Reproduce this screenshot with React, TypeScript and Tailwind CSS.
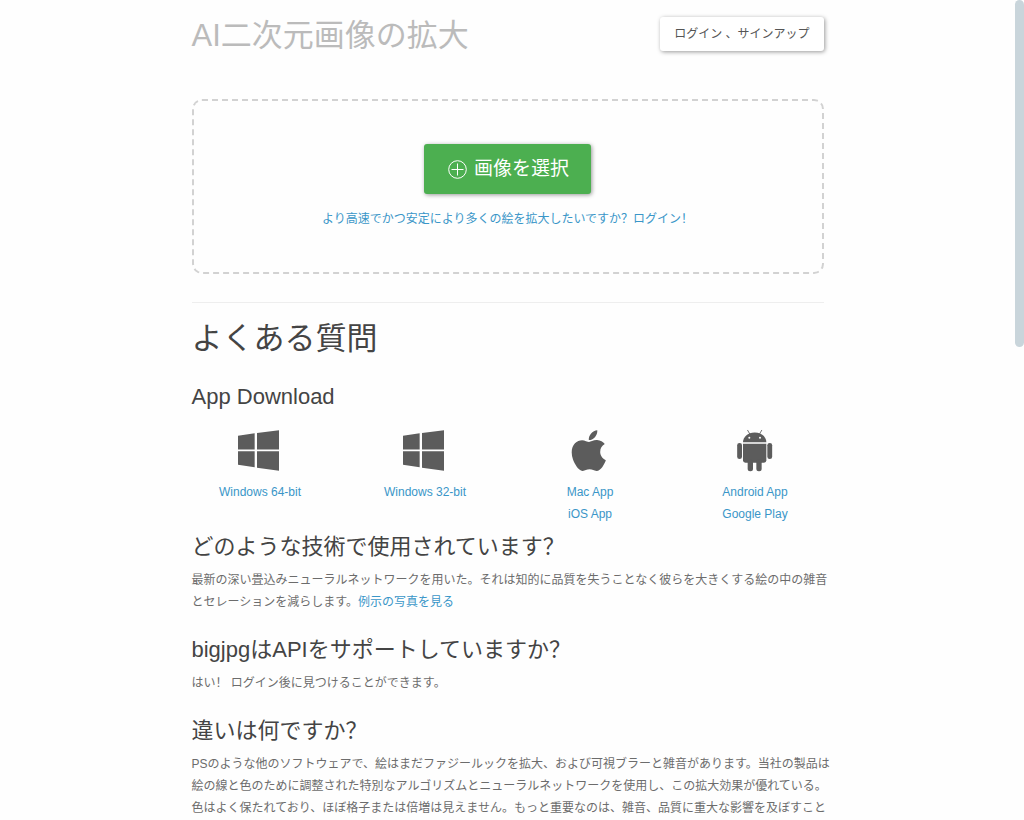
import type { ReactNode } from 'react';

interface DownloadLink {
  label: string;
  href: string;
}

interface Platform {
  name: string;
  icon: ReactNode;
  links: DownloadLink[];
}

interface FaqItem {
  question: string;
  answer: ReactNode;
}

function WindowsIcon() {
  return (
    <svg viewBox="174 26 132 132" className="h-11 w-11" fill="currentColor" aria-hidden="true">
      <path d="M174 46.5 224 39v48.500H174zM231 38l66-8.500V87.500H231zM174 93h50v47.500L174 133.500zM231 93h66v58.500L231 142z" />
    </svg>
  );
}

function AppleIcon() {
  return (
    <svg viewBox="144 26 132 132" className="h-11 w-11" fill="currentColor" aria-hidden="true">
      <path
        transform="translate(154 21.3) scale(.272)"
        d="M318.7 268.7c-.2-36.7 16.4-64.4 50-84.8-18.800-26.900-47.200-41.700-84.700-44.600-35.500-2.800-74.300 20.700-88.500 20.700-15 0-49.400-19.700-76.400-19.700C63.300 141.200 4 184.800 4 273.500q0 39.300 14.400 81.200c12.800 36.700 59 126.700 107.200 125.200 25.200-.6 43-17.900 75.800-17.900 31.800 0 48.300 17.900 76.400 17.900 48.600-.7 90.400-82.500 102.600-119.300-65.200-30.700-61.700-90-61.700-91.900zm-56.600-164.200c27.300-32.400 24.800-61.900 24-72.500-24.100 1.400-52 16.400-67.900 34.900-17.500 19.800-27.800 44.300-25.600 71.900 26.100 2 49.900-11.400 69.500-34.300z"
      />
    </svg>
  );
}

function AndroidIcon() {
  return (
    <svg viewBox="639 26 132 132" className="h-11 w-11" fill="currentColor" aria-hidden="true">
      <path d="M669 66c0-16 14-29.500 35-29.500S739 50 739 66z" />
      <path d="m683 30 7 12M725 30l-7 12" stroke="currentColor" strokeWidth="2.5" strokeLinecap="round" />
      <circle cx="688" cy="52" r="3" fill="#fefefe" />
      <circle cx="720" cy="52" r="3" fill="#fefefe" />
      <path d="M669 70.500h70v49.500a7 7 0 0 1-7 7h-56a7 7 0 0 1-7-7z" />
      <rect x="651.500" y="68" width="14.500" height="48" rx="7" />
      <rect x="742" y="68" width="14.500" height="48" rx="7" />
      <rect x="683" y="118" width="16" height="34.500" rx="7.500" />
      <rect x="709" y="118" width="16" height="34.500" rx="7.500" />
    </svg>
  );
}

function PlusCircleIcon() {
  return (
    <svg viewBox="0 0 19 19" className="h-[19px] w-[19px]" fill="none" stroke="currentColor" aria-hidden="true">
      <circle cx="9.500" cy="9.500" r="8.800" />
      <path d="M9.500 3.500v12M3.500 9.500h12" />
    </svg>
  );
}

const linkClass = 'text-[#3a96c8] hover:underline';

const platforms: Platform[] = [
  { name: 'win64', icon: <WindowsIcon />, links: [{ label: 'Windows 64-bit', href: '#win64' }] },
  { name: 'win32', icon: <WindowsIcon />, links: [{ label: 'Windows 32-bit', href: '#win32' }] },
  {
    name: 'apple',
    icon: <AppleIcon />,
    links: [
      { label: 'Mac App', href: '#mac' },
      { label: 'iOS App', href: '#ios' },
    ],
  },
  {
    name: 'android',
    icon: <AndroidIcon />,
    links: [
      { label: 'Android App', href: '#android' },
      { label: 'Google Play', href: '#play' },
    ],
  },
];

const faq: FaqItem[] = [
  {
    question: 'どのような技術で使用されています？',
    answer: (
      <>
        最新の深い畳込みニューラルネットワークを用いた。それは知的に品質を失うことなく彼らを大きくする絵の中の雑音とセレーションを減らします。
        <a href="#examples" className={linkClass}>例示の写真を見る</a>
      </>
    ),
  },
  {
    question: 'bigjpgはAPIをサポートしていますか？',
    answer: 'はい！ ログイン後に見つけることができます。',
  },
  {
    question: '違いは何ですか？',
    answer:
      'PSのような他のソフトウェアで、絵はまだファジールックを拡大、および可視ブラーと雑音があります。当社の製品は絵の線と色のために調整された特別なアルゴリズムとニューラルネットワークを使用し、この拡大効果が優れている。色はよく保たれており、ほぼ格子または倍増は見えません。もっと重要なのは、雑音、品質に重大な影響を及ぼすこと',
  },
];

export default function App() {
  return (
    <div className="relative min-h-screen bg-[#fefefe] pr-[9px] font-['Liberation_Sans','Noto_Sans_CJK_SC',sans-serif] text-xs leading-[22px] text-[#6c6c6c]">
      {/* scroll thumb */}
      <div className="absolute top-0 right-0 h-[347px] w-[9px] rounded-full bg-[#c9d5db]" />

      <div className="mx-auto max-w-[632px]">
        <header className="flex items-start justify-between pt-[17px]">
          <h1 className="text-[31px] leading-[38px] text-[#bbb]">AI二次元画像の拡大</h1>
          <button
            type="button"
            className="h-[34px] rounded-[3px] bg-white px-3.5 text-[#555] shadow-[1px_1px_4px_rgba(0,0,0,0.4)]"
          >
            ログイン 、サインアップ
          </button>
        </header>

        <main>
          <section className="mt-11 flex h-[175px] flex-col items-center rounded-[10px] border-2 border-dashed border-[#d2d2d2] pt-[43px]">
            <button
              type="button"
              className="flex h-[50px] items-center gap-[7px] rounded-[3px] bg-[#4caf50] pr-[22px] pl-6 text-[19px] text-white shadow-[1px_1px_4px_rgba(0,0,0,0.4)]"
            >
              <PlusCircleIcon />
              画像を選択
            </button>
            <a href="#login" className={`mt-3.5 ${linkClass}`}>
              より高速でかつ安定により多くの絵を拡大したいですか？ログイン！
            </a>
          </section>

          <hr className="mt-7 border-[#eee]" />

          <h2 className="mt-4 text-[31px] leading-10 text-[#444]">よくある質問</h2>

          <section>
            <h3 className="mt-6 text-[22px] leading-7 text-[#444]">App Download</h3>
            <ul className="-mx-3.5 mt-[18px] grid grid-cols-4 text-center">
              {platforms.map((platform) => (
                <li key={platform.name} className="flex flex-col items-center text-[#5c5c5c]">
                  {platform.icon}
                  <div className="mt-2 flex flex-col">
                    {platform.links.map((link) => (
                      <a key={link.label} href={link.href} className={linkClass}>
                        {link.label}
                      </a>
                    ))}
                  </div>
                </li>
              ))}
            </ul>
          </section>

          <div className="mt-2 flex flex-col gap-[23px]">
            {faq.map((item) => (
              <section key={item.question}>
                <h3 className="text-[22px] leading-7 text-[#444]">{item.question}</h3>
                <p className="mt-2 -mr-3">{item.answer}</p>
              </section>
            ))}
          </div>
        </main>
      </div>
    </div>
  );
}
